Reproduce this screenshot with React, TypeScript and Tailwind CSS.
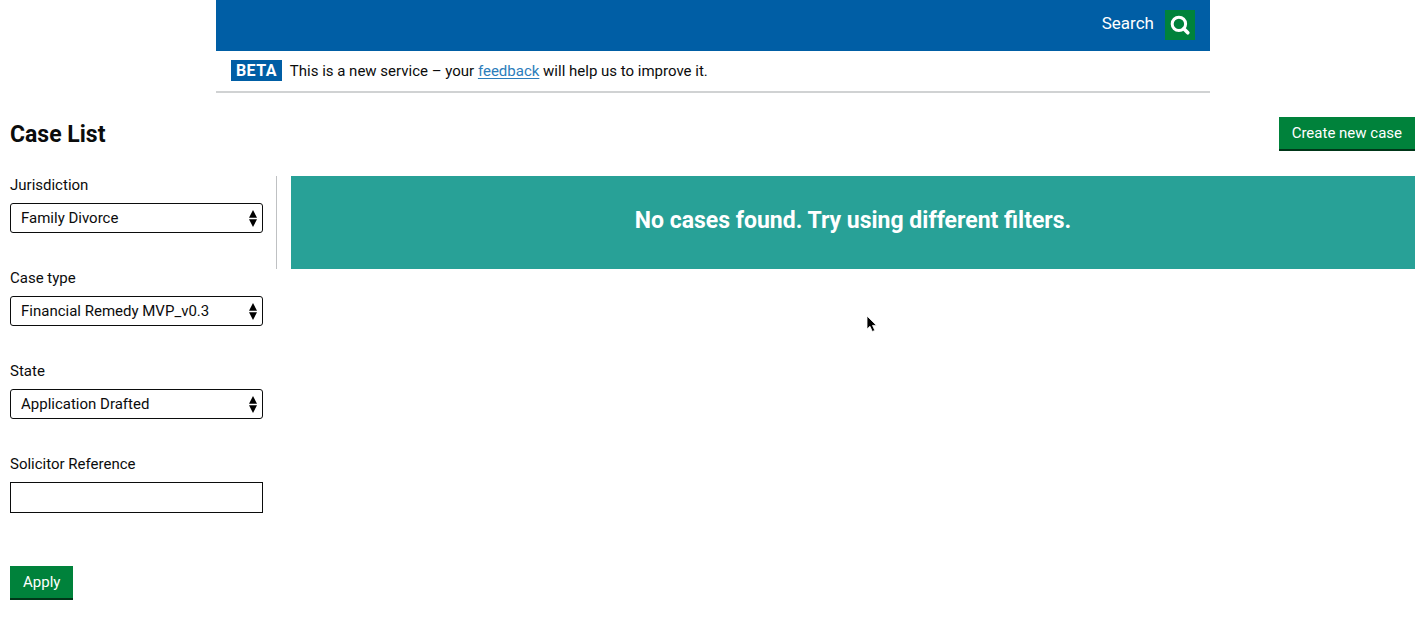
import { useId } from "react";

function SearchIcon() {
  return (
    <svg viewBox="0 0 30 30" className="size-[30px]" fill="none" stroke="#fff" aria-hidden="true">
      <circle cx="13.9" cy="13.9" r="6.7" strokeWidth="3" />
      <path d="M18.8 18.8L22.8 22.8" strokeWidth="3.6" strokeLinecap="round" />
    </svg>
  );
}

function SelectField({ label, options }: { label: string; options: string[] }) {
  const id = useId();
  return (
    <div className="flex flex-col gap-[9px]">
      <label htmlFor={id} className="leading-[18px]">{label}</label>
      <div className="relative">
        <select
          id={id}
          className="block h-[30px] w-full appearance-none rounded-[3px] border border-[#0b0c0c] bg-white pr-6 pl-2.5"
        >
          {options.map((option) => (
            <option key={option}>{option}</option>
          ))}
        </select>
        <svg
          viewBox="0 0 8 17"
          className="pointer-events-none absolute top-[7px] right-1.5 h-[17px] w-2"
          fill="#000"
          aria-hidden="true"
        >
          <path d="M4 0L8 7.8H0zM0 9.2H8L4 17z" />
        </svg>
      </div>
    </div>
  );
}

function Header() {
  return (
    <header className="mx-auto max-w-[994px]">
      <div className="flex items-start justify-end gap-[11px] bg-[#005ea5] pt-2.5 pr-[15px] pb-[11px] text-white">
        <label htmlFor="search" className="text-[17px] leading-[26px]">Search</label>
        <button id="search" type="button" className="bg-[#00823b]">
          <SearchIcon />
        </button>
      </div>
      <div className="flex items-center gap-2 border-b-2 border-[#d0d2d3] px-[15px] pt-[9px] pb-2.5">
        <strong className="bg-[#005ea5] px-[5px] text-base leading-[21px] font-bold tracking-wide text-white">BETA</strong>
        <p className="leading-5">
          This is a new service – your{" "}
          <a href="#feedback" className="text-[#2b7dbb] underline underline-offset-2">feedback</a>{" "}
          will help us to improve it.
        </p>
      </div>
    </header>
  );
}

export default function App() {
  return (
    <div className="font-['Roboto','Liberation_Sans',sans-serif] text-[15px] text-[#0b0c0c]">
      <Header />
      <main className="pt-6 pr-[11px] pl-2.5">
        <div className="flex items-start justify-between">
          <h1 className="text-[23px] leading-9 font-bold">Case List</h1>
          <button type="button" className="border-b-2 border-[#003618] bg-[#00823b] px-[13px] leading-8 text-white">
            Create new case
          </button>
        </div>
        <div className="mt-[23px] flex items-start gap-[13px]">
          <form className="w-[253px] shrink-0" onSubmit={(e) => e.preventDefault()}>
            <div className="flex flex-col gap-9">
              <SelectField label="Jurisdiction" options={["Family Divorce"]} />
              <SelectField label="Case type" options={["Financial Remedy MVP_v0.3"]} />
              <SelectField label="State" options={["Application Drafted"]} />
              <div className="flex flex-col gap-[9px]">
                <label htmlFor="reference" className="leading-[18px]">Solicitor Reference</label>
                <input id="reference" type="text" className="h-[31px] w-full border border-[#0b0c0c] px-2" />
              </div>
            </div>
            <button type="submit" className="mt-[53px] border-b-2 border-[#003618] bg-[#00823b] px-[13px] leading-8 text-white">
              Apply
            </button>
          </form>
          <section className="grow border-l border-[#bfc1c3] pl-3.5">
            <div className="bg-[#28a197] px-4 pt-[27px] pb-[30px] text-center">
              <h2 className="text-[23px] leading-9 font-bold text-white">
                No cases found. Try using different filters.
              </h2>
            </div>
          </section>
        </div>
      </main>
      <svg
        viewBox="0 0 12 18"
        className="pointer-events-none absolute top-[315px] left-[866px] h-[18px] w-3"
        aria-hidden="true"
      >
        <path d="M1 1V14L4 11.3L6.3 16.5L8.8 15.4L6.5 10.4H10.5Z" fill="#000" stroke="#fff" strokeWidth="0.8" />
      </svg>
    </div>
  );
}
